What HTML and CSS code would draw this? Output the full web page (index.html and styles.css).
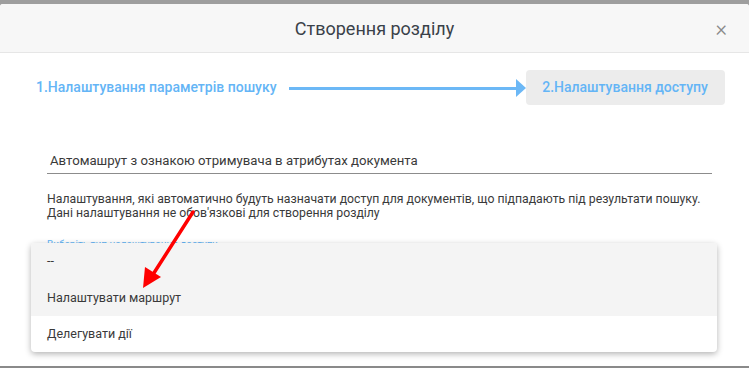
FILE: index.html
```html
<!DOCTYPE html>
<html lang="uk">
  <head>
    <meta charset="UTF-8" />
    <meta name="viewport" content="width=device-width, initial-scale=1.0" />
    <title>Створення розділу</title>
    <link rel="stylesheet" href="styles.css">
  </head>
  <body>
    <div class="modal">
      <div class="modal-header">
        <h2>Створення розділу</h2>
        <span class="close">&times;</span>
      </div>
      <div class="modal-body">
        <div class="steps">
          <div class="step">1.Налаштування параметрів пошуку</div>
          <div class="step-arrow"></div>
          <div class="step current">2.Налаштування доступу</div>
        </div>
        <div class="field">
          <div class="field-input">Автомашрут з ознакою отримувача в атрибутах документа</div>
        </div>
        <p class="hint">
          Налаштування, які автоматично будуть назначати доступ для документів, що підпадають під результати пошуку.<br>
          Дані налаштування не обов'язкові для створення розділу
        </p>
        <div class="select-field">
          <label>Виберіть тип налаштування доступу</label>
          <ul class="menu">
            <li class="hovered">--</li>
            <li class="hovered">Налаштувати маршрут</li>
            <li>Делегувати дії</li>
          </ul>
        </div>
        <div class="footer-line"></div>
      </div>
    </div>
    <svg class="pointer" width="749" height="368" viewBox="0 0 749 368">
      <line x1="193" y1="212" x2="152" y2="276" stroke="#ff0000" stroke-width="3.5" stroke-linecap="round" />
      <polygon points="143,288 145,267 161,277" fill="#ff0000" />
    </svg>
  </body>
</html>
```

FILE: styles.css
```css
body {
  margin: 0;
  font-family: Roboto, "Noto Sans", sans-serif;
  background-color: #9e9e9e;
  height: 368px;
  overflow: hidden;
  position: relative;
}
.modal {
  margin-top: 4px;
  background-color: #fff;
  border-radius: 3px 3px 0 0;
  height: 364px;
  overflow: hidden;
}
.modal-header {
  height: 48px;
  background-color: #f7f7f7;
  border-bottom: 1px solid #e6e6e6;
  display: flex;
  align-items: center;
  justify-content: center;
  position: relative;
}
.modal-header h2 {
  margin: 0;
  font-size: 18px;
  font-weight: 400;
  color: #3a4149;
}
.close {
  position: absolute;
  right: 22px;
  top: 12px;
  font-size: 22px;
  color: #8a8a8a;
  font-weight: 300;
}
.modal-body {
  padding: 16px 25px 0 36px;
  position: relative;
}
.steps {
  display: flex;
  align-items: center;
  height: 36px;
}
.step {
  font-size: 14px;
  font-weight: 500;
  color: #64b5f6;
  white-space: nowrap;
  flex-shrink: 0;
}
.step.current {
  background-color: #ececec;
  border-radius: 4px;
  width: 199px;
  height: 35px;
  display: flex;
  align-items: center;
  justify-content: center;
}
.step-arrow {
  width: 227px;
  height: 3px;
  background-color: #6cb8f6;
  margin: 2px 10px 0 12px;
  position: relative;
  flex-shrink: 0;
}
.step-arrow::after {
  content: "";
  position: absolute;
  right: -10px;
  top: -8px;
  border-left: 10px solid #6cb8f6;
  border-top: 9px solid transparent;
  border-bottom: 9px solid transparent;
}
.field {
  margin: 48px 12px 0 11px;
}
.field-input {
  font-size: 13.2px;
  color: #3a3a3a;
  padding: 0 0 5px 3px;
  border-bottom: 1px solid #8c8c8c;
}
.hint {
  margin: 18px 0 0 11px;
  font-size: 12.25px;
  line-height: 14px;
  color: #3a3a3a;
  white-space: nowrap;
}
.select-field {
  margin: 19px 0 0 11px;
  position: relative;
}
.select-field label {
  font-size: 10px;
  color: #64b5f6;
  display: block;
  height: 12px;
}
.menu {
  position: absolute;
  left: -16px;
  top: 4px;
  width: 686px;
  margin: 0;
  padding: 0;
  list-style: none;
  background-color: #fff;
  border-radius: 4px;
  box-shadow: 0 2px 6px rgba(0, 0, 0, 0.3);
  overflow: hidden;
  z-index: 2;
}
.menu li {
  height: 36px;
  line-height: 36px;
  padding-left: 16px;
  font-size: 12.5px;
  color: #3a3a3a;
}
.menu li:first-child {
  height: 37px;
}
.menu li.hovered {
  background-color: #f4f4f4;
}
.footer-line {
  margin: 115px 0 0 -36px;
  width: 749px;
  border-top: 2px solid #8a8a8a;
}
.pointer {
  position: absolute;
  left: 0;
  top: 0;
  z-index: 3;
}
```
